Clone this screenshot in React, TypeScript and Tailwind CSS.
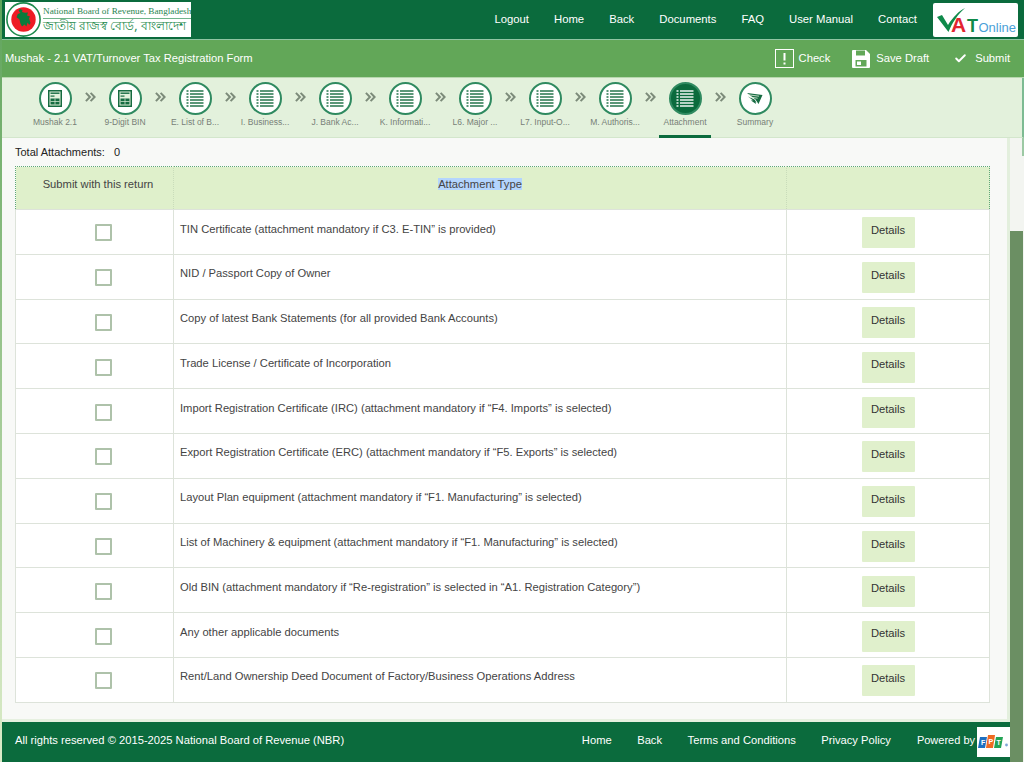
import { Check } from "lucide-react";

const navLinks = ["Logout", "Home", "Back", "Documents", "FAQ", "User Manual", "Contact"];
const steps = [
  { label: "Mushak 2.1", icon: "form" },
  { label: "9-Digit BIN", icon: "form" },
  { label: "E. List of B...", icon: "list" },
  { label: "I. Business...", icon: "list" },
  { label: "J. Bank Ac...", icon: "list" },
  { label: "K. Informati...", icon: "list" },
  { label: "L6. Major ...", icon: "list" },
  { label: "L7. Input-O...", icon: "list" },
  { label: "M. Authoris...", icon: "list" },
  { label: "Attachment", icon: "list", active: true },
  { label: "Summary", icon: "plane" },
];
const rows = [
  "TIN Certificate (attachment mandatory if C3. E-TIN” is provided)",
  "NID / Passport Copy of Owner",
  "Copy of latest Bank Statements (for all provided Bank Accounts)",
  "Trade License / Certificate of Incorporation",
  "Import Registration Certificate (IRC) (attachment mandatory if “F4. Imports” is selected)",
  "Export Registration Certificate (ERC) (attachment mandatory if “F5. Exports” is selected)",
  "Layout Plan equipment (attachment mandatory if “F1. Manufacturing” is selected)",
  "List of Machinery & equipment (attachment mandatory if “F1. Manufacturing” is selected)",
  "Old BIN (attachment mandatory if “Re-registration” is selected in “A1. Registration Category”)",
  "Any other applicable documents",
  "Rent/Land Ownership Deed Document of Factory/Business Operations Address",
];
const footerLinks = ["Home", "Back", "Terms and Conditions", "Privacy Policy"];

const FormIcon = ({ color }: { color: string }) => (
  <svg width="14" height="17" viewBox="0 0 14 17" fill="none">
    <rect x="0.75" y="0.75" width="12.5" height="15.5" fill="#e3f1dc" stroke={color} strokeWidth="1.5" />
    <rect x="2.5" y="2.5" width="9" height="1.4" fill={color} />
    <rect x="2.5" y="5.5" width="4" height="1.2" fill={color} />
    <rect x="2.5" y="8.5" width="9" height="6" fill={color} />
    <path d="M2.5 11.5h9M7 8.5v6" stroke="#e3f1dc" strokeWidth="0.7" />
  </svg>
);

const ListIcon = ({ color }: { color: string }) => (
  <svg width="18" height="17" viewBox="0 0 18 17" fill={color}>
    {[1, 4, 7, 10, 13, 16].map((y) => (
      <g key={y}>
        <rect x="0.5" y={y - 0.7} width="2" height="1.4" />
        <rect x="4" y={y - 0.7} width="13.5" height="1.4" />
      </g>
    ))}
  </svg>
);

const PlaneIcon = ({ color }: { color: string }) => (
  <svg width="16" height="13" viewBox="0 0 16 13" fill={color}>
    <path d="M0 1 15.5 3 11.5 12 8.5 7.5 Z" />
    <path d="M1 4.5 7.5 7.5 9.5 11 Z" />
    <path d="M4 8.5 8 8 9 12 Z" />
    <path d="M1.5 2.8 12 4.2M2.5 5 10.6 6.2" stroke="#e8f3e2" strokeWidth="0.8" />
  </svg>
);

const Chevrons = () => (
  <svg width="11" height="10" viewBox="0 0 11 10" fill="none" stroke="#7c8b7a" strokeWidth="2">
    <path d="M.9 .9 4.9 5 .9 9.1M5.6 .9 9.6 5 5.6 9.1" />
  </svg>
);

const Emblem = () => (
  <svg width="35" height="35" viewBox="0 0 35 35" className="shrink-0">
    <circle cx="17.5" cy="17.5" r="16.6" fill="#fff" stroke="#1c8a4c" strokeWidth="1.6" />
    <circle cx="17.5" cy="17.5" r="12.2" fill="#ee1c25" />
    <path
      d="M14 7 16.5 8 16 10 19 10.8 22 10.4 21 13.5 24 14.4 23 16.5 24.5 21 23.2 23 21.6 20.6 20.4 24.4 18.6 22.4 16 24.4 14.4 21.4 13.5 17.5 10.5 15.2 11.8 12 14.4 11 12.6 8.6Z"
      fill="#0b7a3c"
    />
  </svg>
);

const NbrLogo = () => (
  <div className="ml-[3px] flex h-[35px] w-[186px] items-center gap-[2px] bg-white pl-[1px]">
    <Emblem />
    <div className="min-w-0 flex-1 leading-none">
      <div className="whitespace-nowrap font-['Liberation_Serif',serif] text-[9.2px] text-[#1f8550]">
        National Board of Revenue, Bangladesh
      </div>
      <div className="mt-[2px] whitespace-nowrap border-t border-[#6fb58a] pt-[1px] font-['Noto_Sans','Liberation_Sans',sans-serif] text-[12.2px] text-[#1c8a4c]">
        জাতীয় রাজস্ব বোর্ড, বাংলাদেশ
      </div>
    </div>
  </div>
);

const VatLogo = () => (
  <div className="mr-[6px] h-[34px] w-[85px] rounded-[2px] bg-white">
    <svg width="85" height="34" viewBox="0 0 85 34">
      <text x="18" y="29" fontFamily="Liberation Sans" fontSize="21" fontWeight="700" fill="#e32430">A</text>
      <text x="34" y="29" fontFamily="Liberation Sans" fontSize="18" fontWeight="700" fill="#0f8a4a">T</text>
      <text x="45.5" y="29" fontFamily="Liberation Sans" fontSize="13" fill="#4a9fd8">Online</text>
      <path d="M4 14 9 12 15 22C20 14 26 8 32 5 25 11 19 20 15.5 29Z" fill="#0f8a4a" />
    </svg>
  </div>
);

const FptLogo = () => (
  <div className="flex h-[30px] w-[33px] items-center justify-center bg-white">
    <svg width="31" height="16" viewBox="0 0 31 16">
      <g fontFamily="Liberation Sans" fontSize="7" fontWeight="700" fill="#fff">
        <path d="M2 3h7L7 14H0Z" fill="#1d6fc0" />
        <text x="3" y="11">F</text>
        <path d="M10 1h7l-2 13H8Z" fill="#ee6a22" />
        <text x="10.5" y="10">P</text>
        <path d="M18 3h7l-2 11h-7Z" fill="#23a455" />
        <text x="18.5" y="11">T</text>
      </g>
      <circle cx="28.5" cy="11" r="1.4" fill="#7fa6d6" />
    </svg>
  </div>
);

const Step = ({ label, icon, active }: { label: string; icon: string; active?: boolean }) => {
  const color = active ? "#ffffff" : "#166b41";
  return (
    <div className={`flex h-[60px] w-[52px] shrink-0 flex-col items-center pt-[4px] ${active ? "border-b-[3px] border-[#0b6b3d]" : ""}`}>
      <div
        className={`flex h-[33px] w-[33px] items-center justify-center rounded-full border-2 border-[#2f8a60] ${active ? "bg-[#0b6b3d]" : "bg-white"}`}
      >
        {icon === "form" && <FormIcon color={color} />}
        {icon === "list" && <ListIcon color={color} />}
        {icon === "plane" && <PlaneIcon color={color} />}
      </div>
      <div className="mt-[2px] whitespace-nowrap text-[8.5px] leading-[10px] text-[#777f77]">{label}</div>
    </div>
  );
};

export default function App() {
  return (
    <div className="flex h-screen overflow-hidden bg-[#f8f9f7] font-['Liberation_Sans',Arial,sans-serif]">
      <div className="w-[2px] shrink-0 bg-linear-to-b from-[#5fa45c] to-[#dcecc9]" />
      <div className="flex min-w-0 flex-1 flex-col">
        <header className="flex h-[40px] shrink-0 items-center justify-between border-b border-[#8fc5a3] bg-[#0b6b3d]">
          <NbrLogo />
          <div className="flex items-center">
            <nav className="mr-[16px] flex items-center gap-[25px] text-[11.3px] text-white">
              {navLinks.map((l) => (
                <span key={l}>{l}</span>
              ))}
            </nav>
            <VatLogo />
          </div>
        </header>

        <div className="flex h-[38px] shrink-0 items-center justify-between border-b border-[#b7d7ae] bg-[#62a758] pl-[3px] pr-[14px] text-white">
          <div className="text-[11.2px] font-medium">Mushak - 2.1 VAT/Turnover Tax Registration Form</div>
          <div className="flex items-center text-[11.2px]">
            <svg width="19" height="19" viewBox="0 0 19 19" fill="none" stroke="#fff" className="mr-[5px]">
              <rect x="0.5" y="0.5" width="18" height="18" />
              <path d="M9.5 4v7.5M9.5 13.5v2" strokeWidth="2" />
            </svg>
            <span>Check</span>
            <svg width="18" height="18" viewBox="0 0 18 18" fill="#fff" className="ml-[22px] mr-[6px]">
              <path d="M1 0h13l4 4v13a1 1 0 0 1-1 1H1a1 1 0 0 1-1-1V1a1 1 0 0 1 1-1Z" />
              <rect x="4" y="0.5" width="9" height="5" fill="#62a758" />
              <rect x="3.5" y="10" width="11" height="6.5" fill="#62a758" />
              <rect x="5" y="11.5" width="4" height="3.5" fill="#fff" />
            </svg>
            <span>Save Draft</span>
            <Check size={13} strokeWidth={3.5} className="ml-[25px] mr-[8px]" />
            <span>Submit</span>
          </div>
        </div>

        <div className="flex h-[60px] shrink-0 border-b border-r-2 border-[#d3e6cc] border-r-[#7dbb93] bg-[#e3f1dc] pl-[27px]">
          {steps.map((s, i) => (
            <div key={s.label} className="flex">
              <Step {...s} />
              {i < steps.length - 1 && (
                <div className="flex h-[36px] w-[18px] items-center justify-center pt-[1px]">
                  <Chevrons />
                </div>
              )}
            </div>
          ))}
        </div>

        <div className="flex min-h-0 flex-1">
          <div className="flex min-w-0 flex-1 flex-col">
            <div className="flex min-h-0 flex-1">
              <main className="min-w-0 flex-1 border-b-[3px] border-[#e6f0e0] px-[13px] pt-[7px]">
                <div className="mb-[7px] flex h-[14px] items-center gap-[9px] text-[11px] text-[#222]">
                  <span>Total Attachments:</span>
                  <span>0</span>
                </div>
                <table className="w-[975px] table-fixed border-collapse text-[11.2px] text-[#444]">
                  <thead>
                    <tr className="h-[43px] bg-[#dff0cb] align-middle">
                      <th className="w-[158px] border-y border-l border-r border-dotted border-y-[#5fa878] border-l-[#5fa878] border-r-[#c9dcba] pb-[8px] pl-[7px] text-center font-normal">
                        Submit with this return
                      </th>
                      <th className="w-[613px] border-y border-r border-dotted border-y-[#5fa878] border-r-[#c9dcba] pb-[8px] text-center font-normal">
                        <span className="bg-[#b4d5fe]">Attachment Type</span>
                      </th>
                      <th className="border-y border-r border-dotted border-[#5fa878]" />
                    </tr>
                  </thead>
                  <tbody>
                    {rows.map((r, i) => (
                      <tr key={r} className={`h-[44.8px] bg-white ${i === rows.length - 1 ? "border-b border-[#c5d5bd]" : ""}`}>
                        <td className="border border-[#dde3da]">
                          <div className="ml-[79px] mt-[2px] h-[17px] w-[17px] rounded-[1px] border-2 border-[#aec2aa] bg-white" />
                        </td>
                        <td className="border border-[#dde3da] px-[6px] pb-[6px]">{r}</td>
                        <td className="border border-[#dde3da]">
                          <button className="mx-auto mt-[2px] block h-[31px] w-[53px] rounded-[1px] bg-[#e0f0cc] pb-[5px] text-[11.2px] text-[#333]">
                            Details
                          </button>
                        </td>
                      </tr>
                    ))}
                  </tbody>
                </table>
              </main>
              <div className="w-[3px] shrink-0 bg-[#e3efdd]" />
            </div>

            <footer className="flex h-[40px] shrink-0 items-center justify-between bg-[#0b6b3d] pl-[13px] text-[11.2px] text-white">
              <span className="pb-[4px]">All rights reserved © 2015-2025 National Board of Revenue (NBR)</span>
              <div className="flex items-center">
                <div className="flex gap-[25.5px] pb-[4px]">
                  {footerLinks.map((l) => (
                    <span key={l}>{l}</span>
                  ))}
                </div>
                <span className="ml-[26px] mr-[2px] pb-[4px] text-[11px]">Powered by</span>
                <FptLogo />
              </div>
            </footer>
          </div>
          <div className="flex w-[14px] shrink-0 flex-col bg-[#f3f5f1]">
            <div className="h-[18px] shrink-0 border-r-2 border-[#9cc9a4]" />
            <div className="h-[75px] shrink-0" />
            <div className="mr-[1px] flex-1 bg-[#6b8f63]" />
          </div>
        </div>
      </div>
    </div>
  );
}
